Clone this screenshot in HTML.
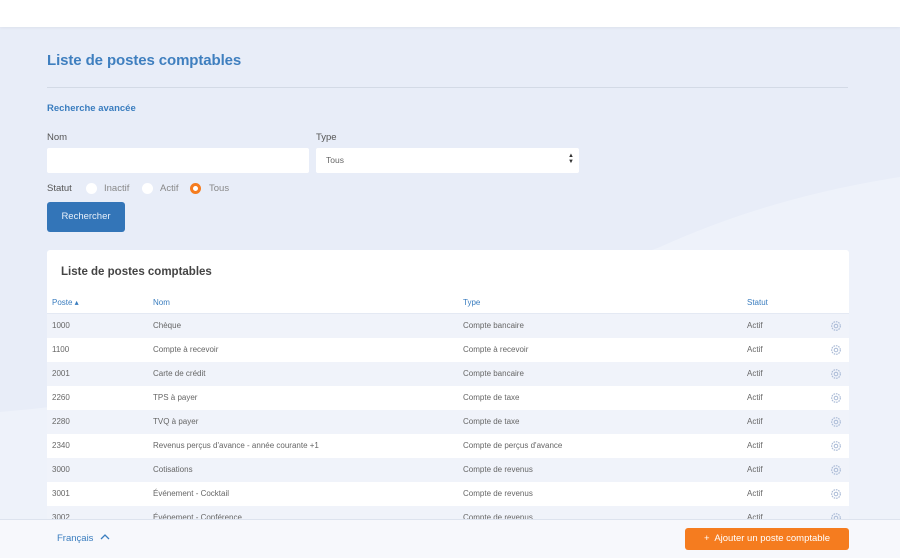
<!DOCTYPE html>
<html><head><meta charset="utf-8"><style>
*{margin:0;padding:0;box-sizing:border-box}
body{width:900px;height:558px;overflow:hidden;font-family:"Liberation Sans",sans-serif;background:#e8edf8;position:relative;color:#555}
.top{position:absolute;left:0;top:0;width:900px;height:27px;background:#fff;box-shadow:0 1px 3px rgba(0,0,0,.05)}
.bg{position:absolute;left:0;top:27px}
.abs{position:absolute}
h1{position:absolute;left:47px;top:52px;font-size:15px;color:#3f7fbf;font-weight:bold;letter-spacing:-.1px}
.hr{position:absolute;left:47px;top:87px;width:801px;height:1px;background:#d3dae6}
.lbl{font-size:9.5px;color:#555}
.inp{position:absolute;background:#fff;height:25px;border-radius:2px}
.radio{position:absolute;width:11px;height:11px;border-radius:50%;background:#fff;top:183px}
.btn{position:absolute;left:47px;top:202px;width:78px;height:30px;background:#3375b8;border-radius:3px;color:#e8f0fa;font-size:9.5px;text-align:center;line-height:30px}
.card{position:absolute;left:47px;top:250px;width:802px;height:280px;background:#fff;border-radius:3px}
.card h2{position:absolute;left:14px;top:16px;font-size:11.5px;color:#444;font-weight:bold}
.th{position:absolute;top:48px;font-size:8px;color:#3a7dbf}
.hdrline{position:absolute;left:0;top:63px;width:802px;height:2px;background:#e4e9f3}
.row{position:absolute;left:0;width:802px;height:24px;font-size:8px;color:#666;line-height:24px;background:#fff}
.row.s{background:#f0f3fa}
.row span{position:absolute}
.gear{position:absolute;left:783px;top:6px;width:12px;height:12px}
.foot{position:absolute;left:0;top:519px;width:900px;height:39px;background:#f7f8fc;border-top:1px solid #dde3ee}
.add{position:absolute;left:685px;top:528px;width:164px;height:22px;background:#f57c1f;border-radius:3px;color:#fff;font-size:9.5px;line-height:22px;text-align:center}
</style></head><body>
<svg class="bg" width="900" height="531"><path d="M660 220 Q770 170 900 150 L900 531 L0 531 L0 385 Q300 360 660 220Z" fill="#eef2fa"/></svg>
<div class="top"></div>
<h1>Liste de postes comptables</h1>
<div class="hr"></div>
<div class="abs" style="left:47px;top:103px;font-size:9.5px;color:#3a7dbf;font-weight:bold">Recherche avancée</div>
<div class="abs lbl" style="left:47px;top:132px">Nom</div>
<div class="abs lbl" style="left:316px;top:132px">Type</div>
<div class="inp" style="left:47px;top:148px;width:262px"></div>
<div class="inp" style="left:316px;top:148px;width:263px"><span style="position:absolute;left:10px;top:7px;font-size:8.5px;color:#666">Tous</span><span style="position:absolute;right:5px;top:5px;font-size:6px;color:#333;line-height:6px">▲<br>▼</span></div>
<div class="abs lbl" style="left:47px;top:183px">Statut</div>
<div class="radio" style="left:86px"></div>
<div class="abs lbl" style="left:104px;top:183px;color:#888">Inactif</div>
<div class="radio" style="left:142px"></div>
<div class="abs lbl" style="left:160px;top:183px;color:#888">Actif</div>
<div class="radio" style="left:190px;border:3px solid #f57c1f"></div>
<div class="abs lbl" style="left:209px;top:183px;color:#888">Tous</div>
<div class="btn">Rechercher</div>
<div class="card">
<h2>Liste de postes comptables</h2>
<div class="th" style="left:5px">Poste ▴</div>
<div class="th" style="left:106px">Nom</div>
<div class="th" style="left:416px">Type</div>
<div class="th" style="left:700px">Statut</div>
<div class="hdrline"></div>
</div>
<div id="rows" class="abs" style="left:47px;top:314px;width:802px;height:205px;overflow:hidden"></div>
<script>
var d=[["1000","Chèque","Compte bancaire"],["1100","Compte à recevoir","Compte à recevoir"],["2001","Carte de crédit","Compte bancaire"],["2260","TPS à payer","Compte de taxe"],["2280","TVQ à payer","Compte de taxe"],["2340","Revenus perçus d'avance - année courante +1","Compte de perçus d'avance"],["3000","Cotisations","Compte de revenus"],["3001","Événement - Cocktail","Compte de revenus"],["3002","Événement - Conférence","Compte de revenus"]];
var h="";d.forEach(function(r,i){h+='<div class="row'+(i%2==0?' s':'')+'" style="top:'+(i*24)+'px"><span style="left:5px">'+r[0]+'</span><span style="left:106px">'+r[1]+'</span><span style="left:416px">'+r[2]+'</span><span style="left:700px">Actif</span><svg class="gear" viewBox="0 0 12 12"><circle cx="6" cy="6" r="4.3" fill="none" stroke="#a9bad6" stroke-width="1.2" stroke-dasharray="1.6 0.9"/><circle cx="6" cy="6" r="1.8" fill="none" stroke="#a9bad6" stroke-width="1"/></svg></div>'});
document.getElementById("rows").innerHTML=h;
</script>
<div class="foot"></div>
<div class="abs" style="left:57px;top:533px;font-size:9.5px;color:#3a7dbf">Français <svg width="10" height="8" style="margin-left:4px" viewBox="0 0 10 8"><path d="M1 6 L5 2 L9 6" fill="none" stroke="#3a7dbf" stroke-width="1.3"/></svg></div>
<div class="add">+&nbsp; Ajouter un poste comptable</div>
</body></html>
